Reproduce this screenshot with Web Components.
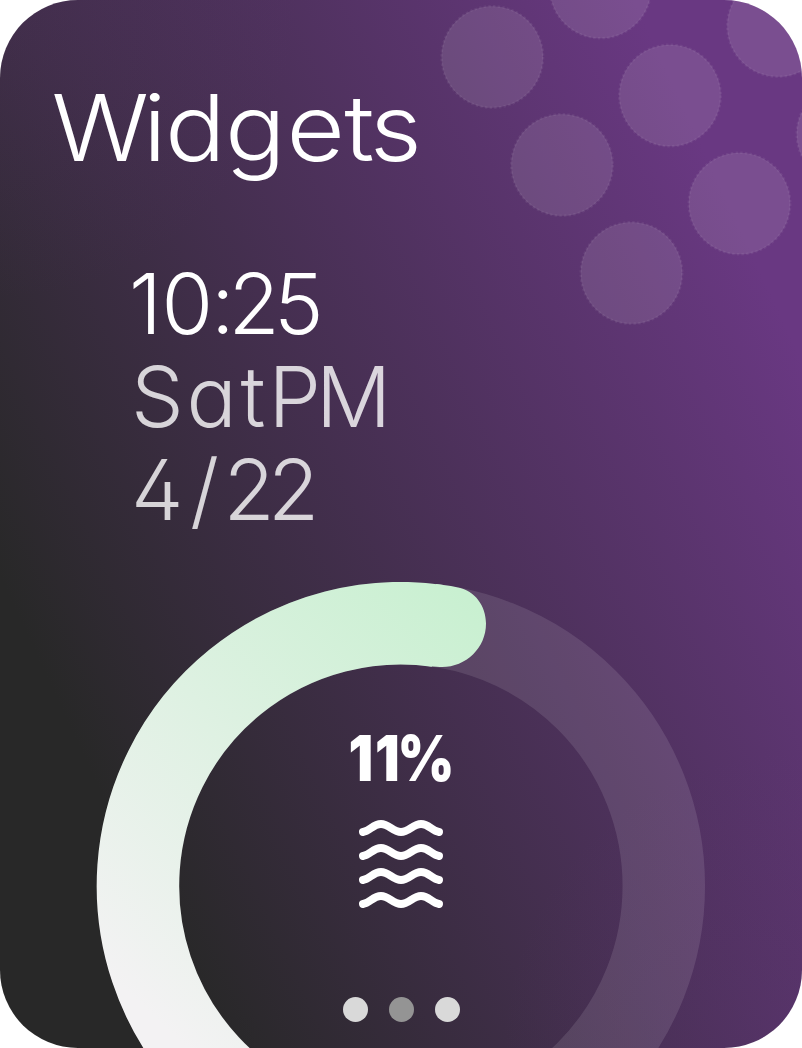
<!DOCTYPE html>
<html lang="en">
<head>
<meta charset="utf-8">
<title>Widgets</title>
<style>
html,body{margin:0;background:#fff}
</style>
</head>
<body>
<widget-screen>
  <dot-pattern slot="decor"></dot-pattern>
  <type-line slot="title" height="186" baseline="161" size="92.5" weight="270" family="Inter" squeeze="1.09" centers="100,155,194,254,316,358.5,396">Widgets</type-line>
  <clock-block slot="clock">
    <type-line height="93" baseline="80" size="83.5" weight="300" family="Inter" centers="143.5,187.5,223,254,299.5">10:25</type-line>
    <type-line class="soft" height="93" baseline="80" size="83.5" weight="290" family="Inter" centers="157.5,207.5,252.5,296.5,354">SatPM</type-line>
    <type-line class="soft" height="93" baseline="80" size="83.5" weight="290" family="Inter" centers="157.5,204.5,249,293.5">4/22</type-line>
  </clock-block>
  <humidity-gauge slot="gauge">
    <type-line height="70" baseline="53" size="63.5" weight="900" family="Inter" squeeze=".86" centers="360.5,387,426">11%</type-line>
    <wave-icon></wave-icon>
    <page-dots></page-dots>
  </humidity-gauge>
</widget-screen>
<script>
function define(name, html, ready) {
  const template = document.createElement('template');
  template.innerHTML = html;
  customElements.define(name, class extends HTMLElement {
    constructor() {
      super();
      this.attachShadow({ mode: 'open' }).append(template.content.cloneNode(true));
    }
    connectedCallback() { if (ready) ready(this); }
  });
}

define('widget-screen', `
<style>
:host{display:grid;grid-template:186px 68px 328px 466px / 802px;position:relative;width:802px;height:1048px;overflow:hidden;border-radius:78px;
background:radial-gradient(circle at 0 0,rgba(105,56,130,.14),rgba(105,56,130,0) 300px),radial-gradient(circle at 100% 100%,rgba(105,56,130,.2),rgba(105,56,130,0) 300px),linear-gradient(65deg,#282828 17%,#693882 87%)}
slot{display:contents}
::slotted([slot=title]){grid-row:1}
::slotted([slot=clock]){grid-row:3}
::slotted([slot=gauge]){grid-row:4}
</style>
<slot name="decor"></slot><slot name="title"></slot><slot name="clock"></slot><slot name="gauge"></slot>`);

define('dot-pattern', `
<style>:host{position:absolute;inset:0 0 auto auto;width:402px;height:340px}svg{display:block}
circle{fill:#fff;fill-opacity:.115;stroke:#fff;stroke-opacity:.06;stroke-width:2.5;stroke-dasharray:2.5 2.2}</style>
<svg width="402" height="340" viewBox="400 0 402 340">
<circle cx="492.3" cy="57" r="50.8"/><circle cx="562" cy="165" r="50.8"/><circle cx="631.5" cy="273" r="50.8"/>
<circle cx="600.5" cy="-12.5" r="50.8"/><circle cx="670" cy="95.5" r="50.8"/><circle cx="739.5" cy="203.5" r="50.8"/>
<circle cx="778" cy="26" r="50.8"/><circle cx="847.5" cy="134" r="50.8"/>
</svg>`);

// One line of text whose glyphs are centred optically on the given x positions.
define('type-line', `
<style>:host{display:block;color:#fff}:host(.soft){color:rgba(255,255,255,.8)}svg{display:block;overflow:visible}text{fill:currentColor;font-feature-settings:"cv02","cv11","calt" 0}</style>
<svg width="802"><text></text></svg>`, el => {
  const get = n => el.getAttribute(n);
  const svg = el.shadowRoot.querySelector('svg');
  const text = svg.firstElementChild;
  const chars = el.textContent.trim();
  const squeeze = +(get('squeeze') || 1);
  const ctx = document.createElement('canvas').getContext('2d');
  const family = get('family') + ', "Liberation Sans", sans-serif';
  ctx.font = get('weight') + ' ' + get('size') + 'px ' + family;
  const xs = get('centers').split(',').map((c, i) => {
    const m = ctx.measureText(chars[i]);
    return (c / squeeze - (m.actualBoundingBoxRight - m.actualBoundingBoxLeft) / 2).toFixed(2);
  });
  svg.setAttribute('height', get('height'));
  text.setAttribute('x', xs.join(' '));
  text.setAttribute('y', get('baseline'));
  text.setAttribute('transform', 'scale(' + squeeze + ' 1)');
  text.style.cssText = 'font-family:' + family + ';font-size:' + get('size') + 'px;font-weight:' + get('weight');
  text.textContent = chars;
});

define('clock-block', `<style>:host{display:flex;flex-direction:column}</style><slot></slot>`);

define('humidity-gauge', `
<style>
:host{display:flex;flex-direction:column;position:relative;padding-top:146px;height:320px}
.ring{position:absolute;left:0;top:0}
.body{position:relative;display:flex;flex-direction:column;align-items:center}
</style>
<svg class="ring" width="802" height="466" viewBox="0 582 802 466">
<defs><linearGradient id="g" gradientUnits="userSpaceOnUse" x1="125" y1="990" x2="480" y2="610">
<stop offset="0" stop-color="#f3f2f3"/><stop offset="1" stop-color="#c9f0d1"/></linearGradient></defs>
<g fill="none" stroke-width="82.5">
<circle cx="401" cy="886" r="262.8" stroke="#fff" stroke-opacity=".11"/>
<path d="M401 1148.8A262.8 262.8 0 1 1 437.6 625.8" stroke="url(#g)"/>
</g>
<path d="M436 584.1L443.3 585Q451 586 458 587.4C475 590.5 486 606 486 623.5C486 648 466 667 442 667Q438 667 428 665.9Z" fill="url(#g)"/></svg>
<div class="body"><slot></slot></div>`);

define('wave-icon', `
<style>:host{display:block;margin-top:18px;height:100px}svg{display:block}</style>
<svg width="90" height="100" viewBox="356 816 90 100" fill="none" stroke="#fff" stroke-width="8" stroke-linecap="round">
<defs><path id="w" d="M363 832C370 831 373 824 381 824S393 832 401 832S413 824 421 824S432 831 439 832"/></defs>
<use href="#w"/><use href="#w" y="24"/><use href="#w" y="48"/><use href="#w" y="72"/></svg>`);

define('page-dots', `
<style>:host{display:flex;gap:21px;margin-top:81px}i{width:25px;height:25px;border-radius:50%;background:#d9d9d9}.on{background:#949494}</style>
<i></i><i class="on"></i><i></i>`);
</script>
</body>
</html>
